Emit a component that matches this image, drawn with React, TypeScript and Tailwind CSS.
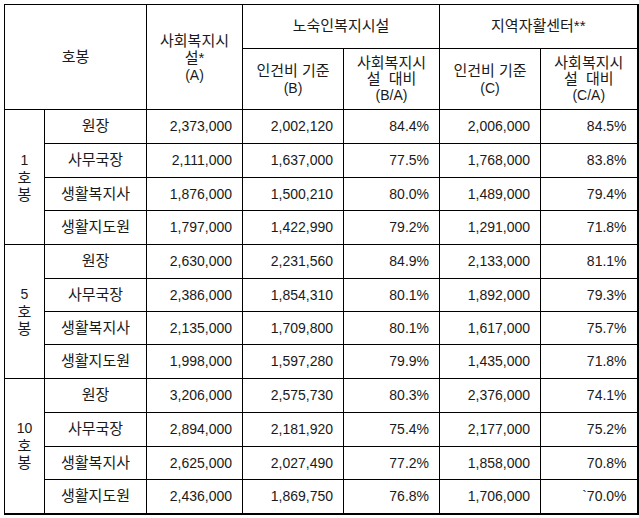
import { Fragment } from "react";

type Row = [string, string, string, string, string, string];

const groups: { label: string[]; rows: Row[]; heights: number[] }[] = [
  {
    label: ["1", "호", "봉"],
    heights: [34, 34, 33, 34],
    rows: [
      ["원장", "2,373,000", "2,002,120", "84.4%", "2,006,000", "84.5%"],
      ["사무국장", "2,111,000", "1,637,000", "77.5%", "1,768,000", "83.8%"],
      ["생활복지사", "1,876,000", "1,500,210", "80.0%", "1,489,000", "79.4%"],
      ["생활지도원", "1,797,000", "1,422,990", "79.2%", "1,291,000", "71.8%"],
    ],
  },
  {
    label: ["5", "호", "봉"],
    heights: [34, 33, 33, 34],
    rows: [
      ["원장", "2,630,000", "2,231,560", "84.9%", "2,133,000", "81.1%"],
      ["사무국장", "2,386,000", "1,854,310", "80.1%", "1,892,000", "79.3%"],
      ["생활복지사", "2,135,000", "1,709,800", "80.1%", "1,617,000", "75.7%"],
      ["생활지도원", "1,998,000", "1,597,280", "79.9%", "1,435,000", "71.8%"],
    ],
  },
  {
    label: ["10", "호", "봉"],
    heights: [34, 34, 33, 34],
    rows: [
      ["원장", "3,206,000", "2,575,730", "80.3%", "2,376,000", "74.1%"],
      ["사무국장", "2,894,000", "2,181,920", "75.4%", "2,177,000", "75.2%"],
      ["생활복지사", "2,625,000", "2,027,490", "77.2%", "1,858,000", "70.8%"],
      ["생활지도원", "2,436,000", "1,869,750", "76.8%", "1,706,000", "`70.0%"],
    ],
  },
];

const cell = "border border-black p-0";
const head = `${cell} font-normal text-[15px]`;
const num = `${cell} text-right pr-[10px]`;

export default function App() {
  return (
    <div className="bg-white w-[639px] h-[518px] pl-[4px] pt-[4px] text-[#1a1a1a] font-['Liberation_Sans','Noto_Sans_CJK_KR',sans-serif] text-[14px]">
      <table className="table-fixed border-collapse w-[633px] border-r-2 border-b-2 border-black">
        <colgroup>
          <col className="w-[40px]" />
          <col className="w-[102px]" />
          <col className="w-[96px]" />
          <col className="w-[101px]" />
          <col className="w-[96px]" />
          <col className="w-[101px]" />
          <col className="w-[97px]" />
        </colgroup>
        <thead>
          <tr className="h-[44px]">
            <th colSpan={2} rowSpan={2} className={head}>
              호봉
            </th>
            <th rowSpan={2} className={`${head} leading-[17px] pt-[2px]`}>
              사회복지시
              <br />
              설*
              <br />
              <span className="text-[14px]">(A)</span>
            </th>
            <th colSpan={2} className={head}>
              노숙인복지시설
            </th>
            <th colSpan={2} className={head}>
              지역자활센터**
            </th>
          </tr>
          <tr className="h-[61px]">
            <th className={`${head} leading-[17px]`}>
              인건비 기준
              <br />
              <span className="text-[14px]">(B)</span>
            </th>
            <th className={`${head} leading-[16px]`}>
              사회복지시
              <br />
              설 &nbsp;대비
              <br />
              <span className="text-[14px]">(B/A)</span>
            </th>
            <th className={`${head} leading-[17px]`}>
              인건비 기준
              <br />
              <span className="text-[14px]">(C)</span>
            </th>
            <th className={`${head} leading-[16px]`}>
              사회복지시
              <br />
              설 &nbsp;대비
              <br />
              <span className="text-[14px]">(C/A)</span>
            </th>
          </tr>
        </thead>
        <tbody>
          {groups.map((g) => (
            <Fragment key={g.label[0]}>
              {g.rows.map((r, i) => (
                <tr key={r[0]} style={{ height: g.heights[i] }}>
                  {i === 0 && (
                    <td rowSpan={4} className={`${cell} text-center leading-[17px]`}>
                      {g.label.map((l, k) => (
                        <div key={l} className={k === 0 ? "" : "text-[15px]"}>
                          {l}
                        </div>
                      ))}
                    </td>
                  )}
                  <td className={`${cell} text-center text-[15px]`}>{r[0]}</td>
                  <td className={num}>{r[1]}</td>
                  <td className={num}>{r[2]}</td>
                  <td className={num}>{r[3]}</td>
                  <td className={num}>{r[4]}</td>
                  <td className={num}>{r[5]}</td>
                </tr>
              ))}
            </Fragment>
          ))}
        </tbody>
      </table>
    </div>
  );
}
